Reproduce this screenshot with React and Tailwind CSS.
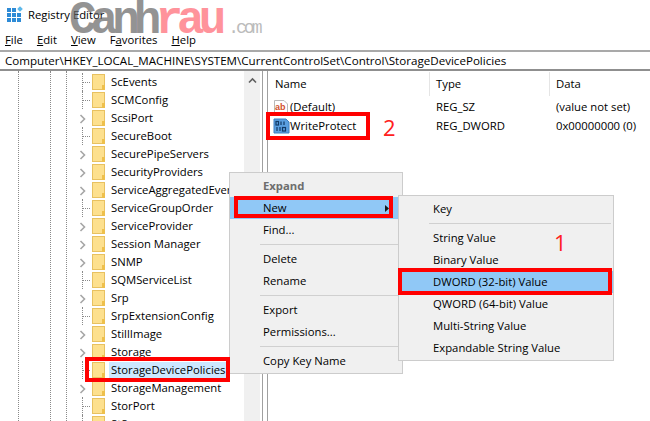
import React from 'react';

const treeRows = [
  ['ScEvents', false],
  ['SCMConfig', false],
  ['ScsiPort', true],
  ['SecureBoot', false],
  ['SecurePipeServers', true],
  ['SecurityProviders', true],
  ['ServiceAggregatedEvents', true],
  ['ServiceGroupOrder', false],
  ['ServiceProvider', true],
  ['Session Manager', true],
  ['SNMP', true],
  ['SQMServiceList', false],
  ['Srp', true],
  ['SrpExtensionConfig', false],
  ['StillImage', true],
  ['Storage', true],
  ['StorageDevicePolicies', false, true],
  ['StorageManagement', true],
  ['StorPort', false],
  ['StS', false],
];

const Folder = () => (
  <svg width="13" height="16" viewBox="0 0 13 16" className="shrink-0">
    <rect x="0.5" y="0.5" width="12" height="15" fill="#fde08e" stroke="#e8c160" />
    <rect x="10" y="11" width="3" height="5" fill="#eec04c" />
  </svg>
);

const RegistryIcon = () => (
  <svg width="18" height="18" viewBox="0 0 18 18">
    <g fill="#2e8bd6">
      <rect x="0" y="2" width="4" height="4" />
      <rect x="5" y="2" width="4" height="4" />
      <rect x="0" y="7" width="4" height="4" />
      <rect x="5" y="7" width="4" height="4" />
      <rect x="10" y="7" width="4" height="4" />
      <rect x="0" y="12" width="4" height="4" />
      <rect x="5" y="12" width="4" height="4" />
      <rect x="10" y="12" width="4" height="4" />
    </g>
    <rect x="11" y="1" width="4" height="4" fill="#5cb8ea" transform="rotate(45 13 3)" />
  </svg>
);

const AbIcon = () => (
  <svg width="16" height="16" viewBox="0 0 16 16">
    <path d="M1.5 1.5H11L14.5 5V14.5H1.5Z" fill="#fff" stroke="#b9b9b9" />
    <text x="2" y="11" fontSize="9" fontWeight="700" fill="#d2502c" fontFamily="'Liberation Sans', sans-serif">ab</text>
  </svg>
);

const BinIcon = () => (
  <svg width="17" height="16" viewBox="0 0 17 16">
    <path d="M1 1H13L16 4V15H1Z" fill="#5b9fe0" stroke="#3f7fc0" />
    <g fill="none" stroke="#123a66" strokeWidth="1.2">
      <rect x="3" y="3.5" width="2.5" height="3.5" />
      <path d="M8 3.5V7M11 3.5V7" />
      <path d="M4 9V13M7 9V13" />
      <rect x="9.5" y="9.5" width="3" height="3.5" />
    </g>
  </svg>
);

const MenuItem = ({ label, disabled, active, sub }) => (
  <div className={`h-[22px] flex items-center ${sub ? 'pl-[34px]' : 'pl-[33px]'} ${active ? 'bg-[#90c8f6]' : ''} ${disabled ? 'text-[#6d6d6d] font-bold' : 'text-black'}`}>
    {label}
  </div>
);

const Sep = () => <div className="h-[7px] flex items-center pl-[30px] pr-[2px]"><div className="h-px w-full bg-[#d0d0d0]" /></div>;

export default function App() {
  return (
    <div className="relative w-[650px] h-[421px] overflow-hidden bg-white text-[11.3px] text-black font-['Open_Sans','Noto_Sans',sans-serif]">
      {/* Title bar */}
      <div className="h-[30px] flex items-center pl-[7px] gap-[3px]">
        <RegistryIcon />
        <span>Registry Editor</span>
      </div>

      {/* Menu */}
      <div className="h-[20px] flex items-center pl-[5px] gap-[14px]">
        <span><u>F</u>ile</span>
        <span><u>E</u>dit</span>
        <span><u>V</u>iew</span>
        <span>F<u>a</u>vorites</span>
        <span><u>H</u>elp</span>
      </div>

      {/* Address bar */}
      <div className="h-[21px] border-y-2 border-t-[#a9a9a9] border-b-[#8f8f8f] flex items-center pl-[5px] text-[11.6px] whitespace-nowrap">
        Computer\HKEY_LOCAL_MACHINE\SYSTEM\CurrentControlSet\Control\StorageDevicePolicies
      </div>

      <div className="flex h-[350px]">
        {/* Tree */}
        <div className="w-[244px] relative overflow-hidden pt-[2px]">
          <div className="absolute left-[18px] top-0 bottom-0 border-l border-dotted border-[#8a8a8a]" />
          <div className="absolute left-[50px] top-0 bottom-0 border-l border-dotted border-[#8a8a8a]" />
          <div className="absolute left-[66px] top-0 bottom-0 border-l border-dotted border-[#8a8a8a]" />
          {treeRows.map(([name, expandable, selected]) => (
            <div key={name} className="h-[18px] flex items-center pl-[92px] relative">
              {expandable ? (
                <svg width="8" height="10" viewBox="0 0 8 10" className="absolute left-[79px] top-[5px]">
                  <path d="M1.5 1L5.5 5L1.5 9" fill="none" stroke="#a6a6a6" strokeWidth="1.6" />
                </svg>
              ) : (
                <>
                  <div className="absolute left-[82px] top-0 h-[18px] border-l border-dotted border-[#8a8a8a]" />
                  <div className="absolute left-[83px] top-[9px] w-[7px] border-t border-dotted border-[#8a8a8a]" />
                </>
              )}
              <Folder />
              <span className={`ml-[4px] pl-[2px] pr-[3px] whitespace-nowrap ${selected ? 'bg-[#cce8ff]' : ''}`}>{name}</span>
            </div>
          ))}
        </div>

        {/* Tree scrollbar */}
        <div className="w-[16px] bg-[#f0f0f0] flex justify-center pt-[6px]">
          <svg width="9" height="7" viewBox="0 0 9 7">
            <path d="M1 5.5L4.5 2L8 5.5" fill="none" stroke="#606060" strokeWidth="1.6" />
          </svg>
        </div>

        {/* Splitter */}
        <div className="w-[6px] bg-white border-x border-[#a0a0a0] ml-[2px]" />

        {/* Value list */}
        <div className="flex-1 pl-[2px]">
          <div className="h-[26px] flex items-center">
            <div className="w-[160px] pl-[5px] h-[24px] flex items-center border-r border-[#e5e5e5]">Name</div>
            <div className="w-[120px] pl-[6px] h-[24px] flex items-center border-r border-[#e5e5e5]">Type</div>
            <div className="pl-[6px]">Data</div>
          </div>
          <div className="h-[20px] flex items-center pl-[3px]">
            <div className="w-[163px] flex items-center gap-px"><AbIcon /><span>(Default)</span></div>
            <div className="w-[120px]">REG_SZ</div>
            <div>(value not set)</div>
          </div>
          <div className="h-[18px] flex items-center pl-[3px]">
            <div className="w-[163px] flex items-center"><BinIcon /><span>WriteProtect</span></div>
            <div className="w-[120px]">REG_DWORD</div>
            <div>0x00000000 (0)</div>
          </div>
        </div>
      </div>

      {/* Watermark */}
      <div className="absolute left-[69px] top-[-7px] flex items-baseline font-['Liberation_Mono',monospace] font-bold text-[46px] leading-[56px] tracking-[-6px] opacity-70 pointer-events-none">
        <span className="text-[#666666]">Canh</span>
        <span className="text-[#ff6672]">rau</span>
        <span className="text-[#a0a0a0] text-[18px] font-normal tracking-[-3px] ml-[8px]">.com</span>
      </div>

      {/* Context menu */}
      <div className="absolute left-[229px] top-[172px] w-[174px] h-[202px] bg-[#f0f0f0] border border-[#cccccc] pt-[2px]">
        <MenuItem label="Expand" disabled />
        <div className="relative ml-[2px] -mr-px">
          <div className="-ml-[2px]"><MenuItem label="New" active /></div>
          <svg width="4" height="7" viewBox="0 0 4 7" className="absolute right-[14px] top-[8px]">
            <path d="M0 0L4 3.5L0 7Z" fill="#1a1a1a" />
          </svg>
        </div>
        <MenuItem label="Find..." />
        <Sep />
        <MenuItem label="Delete" />
        <MenuItem label="Rename" />
        <Sep />
        <MenuItem label="Export" />
        <MenuItem label="Permissions..." />
        <Sep />
        <MenuItem label="Copy Key Name" />
      </div>

      {/* New submenu */}
      <div className="absolute left-[398px] top-[195px] w-[216px] h-[166px] bg-[#f0f0f0] border border-[#cccccc] pt-[2px]">
        <MenuItem sub label="Key" />
        <Sep />
        <MenuItem sub label="String Value" />
        <MenuItem sub label="Binary Value" />
        <MenuItem sub label="DWORD (32-bit) Value" active />
        <MenuItem sub label="QWORD (64-bit) Value" />
        <MenuItem sub label="Multi-String Value" />
        <MenuItem sub label="Expandable String Value" />
      </div>

      {/* Red annotations */}
      <div className="absolute left-[266px] top-[112px] w-[104px] h-[28px] border-[4px] border-[#ff0000]" />
      <div className="absolute left-[234px] top-[196px] w-[159px] h-[22px] border-[4px] border-[#ff0000]" />
      <div className="absolute left-[398px] top-[268px] w-[214px] h-[27px] border-[4px] border-[#ff0000]" />
      <div className="absolute left-[85px] top-[357px] w-[145px] h-[25px] border-[4px] border-[#ff0000]" />
      <div className="absolute left-[383px] top-[113px] text-[22px] leading-[28px] text-[#ff2020]">2</div>
      <div className="absolute left-[554px] top-[228px] text-[22px] leading-[28px] text-[#ff2020]">1</div>
    </div>
  );
}
